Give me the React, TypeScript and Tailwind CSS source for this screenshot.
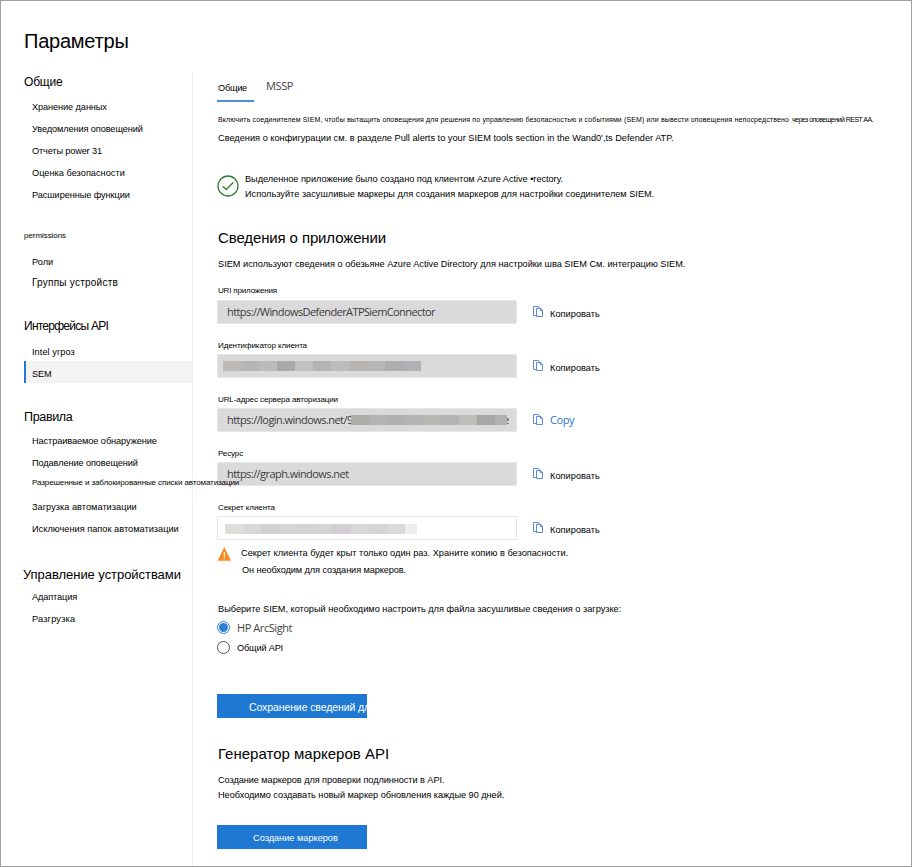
import type { ReactNode } from "react";

const CopyIcon = () => (
  <svg className="size-3 shrink-0" viewBox="0 0 12 12" fill="none" stroke="#5b8ad6" strokeWidth="1">
    <path d="M3 9.5H.5V.5H5.5L6.5 2" />
    <path d="M3.5 2.5H7.5L9.5 4.5V10.5H3.5Z" />
    <path d="M7.5 2.5V4.5H9.5" />
  </svg>
);

type Item = { text: string; cls: string };

const NavItem = ({ text, cls }: Item) => (
  <div className={`h-[22px] pl-2 leading-[22px] ${cls}`}>{text}</div>
);

const NavHeading = ({ text, cls }: Item) => (
  <div className={`h-[22px] leading-[22px] ${cls}`}>{text}</div>
);

const Blocks = ({ colors }: { colors: string[] }) => (
  <span className="flex h-[10px]">
    {colors.map((c, i) => (
      <span key={i} className={`h-[10px] ${c}`} />
    ))}
  </span>
);

type FieldProps = {
  label: string;
  labelCls: string;
  boxCls: string;
  action?: ReactNode;
  children: ReactNode;
};

const Field = ({ label, labelCls, boxCls, action, children }: FieldProps) => (
  <div className="h-[54px]">
    <div className={`h-5 pl-px text-[8px] leading-5 ${labelCls}`}>{label}</div>
    <div className="flex h-6">
      <div className={`flex h-6 w-[300px] items-center border border-[#e6e6e6] font-['Open_Sans'] text-[11px] leading-[22px] text-[#3c3c3c] ${boxCls}`}>
        {children}
      </div>
      <div className="ml-4 flex pt-1.5">
        <CopyIcon />
        {action ?? <span className="ml-[5px] h-4 text-[9.2px] leading-[16px] tracking-[0.04px]">Копировать</span>}
      </div>
    </div>
  </div>
);

const Sidebar = () => (
  <nav className="h-[795px] w-[169px] shrink-0 border-r border-[#f0f0f0] text-[9.2px]">
    <NavHeading text="Общие" cls="-mt-px text-[12px] tracking-[-0.2px]" />
    <NavItem text="Хранение данных" cls="mt-[3px] tracking-[-0.09px]" />
    <NavItem text="Уведомления оповещений" cls="tracking-[-0.1px]" />
    <NavItem text="Отчеты power 31" cls="tracking-[-0.15px]" />
    <NavItem text="Оценка безопасности" cls="tracking-[0.02px]" />
    <NavItem text="Расширенные функции" cls="tracking-[-0.08px]" />

    <NavHeading text="permissions" cls="mt-[19px] text-[8px] tracking-[-0.06px]" />
    <NavItem text="Роли" cls="mt-1" />
    <NavItem text="Группы устройств" cls="-mt-px text-[10px] tracking-[0.24px]" />

    <NavHeading text="Интерфейсы API" cls="mt-[21px] text-[12px] tracking-[-0.75px]" />
    <NavItem text="Intel угроз" cls="mt-1 tracking-[0.06px]" />
    <div className="-mt-0.5 h-[22px] border-l-2 border-[#1f78d1] bg-[#f3f3f3] pl-1.5 pt-0.5 leading-[22px] tracking-[-0.15px]">SEM</div>

    <NavHeading text="Правила" cls="mt-[23px] text-[12.5px] tracking-[-0.33px]" />
    <NavItem text="Настраиваемое обнаружение" cls="mt-0.5 tracking-[-0.08px]" />
    <NavItem text="Подавление оповещений" cls="tracking-[-0.1px]" />
    <NavItem text="Разрешенные и заблокированные списки автоматизации" cls="relative z-10 -mt-0.5 whitespace-nowrap text-[8px] tracking-[-0.1px]" />
    <NavItem text="Загрузка автоматизации" cls="mt-0.5 tracking-[0.03px]" />
    <NavItem text="Исключения папок автоматизации" cls="tracking-[0.02px]" />

    <NavHeading text="Управление устройствами" cls="-ml-px mt-6 whitespace-nowrap text-[13px] tracking-[-0.05px]" />
    <NavItem text="Адаптация" cls="tracking-[-0.13px]" />
    <NavItem text="Разгрузка" cls="tracking-[0.19px]" />
  </nav>
);

const Settings = () => (
  <main className="ml-6 w-[680px] whitespace-nowrap text-[9.2px]">
    <div className="flex h-[30px]">
      <div className="h-[30px] w-[37px] border-b-2 border-[#4a8fda] pl-px pt-[5px] leading-[22px] tracking-[-0.25px]">Общие</div>
      <div className="ml-3 pt-1 font-['Open_Sans'] text-[11px] leading-[20px] tracking-[-0.4px] text-[#444]">MSSP</div>
    </div>

    <div className="mt-[9px] flex h-[18px] pl-px text-[7px] leading-[18px]">
      <span className="tracking-[0.132px]">Включить соединителем SIEM, чтобы вытащить оповещения для решения по управлению безопасностью и событиями (SEM) или вывести оповещения непосредствено</span>
      <span className="ml-[3px] tracking-[-0.52px]">через оповещений REST AA.</span>
    </div>
    <div className="h-[18px] pl-px leading-[18px] tracking-[0.012px]">Сведения о конфигурации см. в разделе Pull alerts to your SIEM tools section in the Wand0',ts Defender ATP.</div>

    <div className="mt-[25px] flex h-[30px]">
      <svg className="mt-[3px] size-[22px]" viewBox="0 0 22 22" fill="none" stroke="#2f7d32">
        <circle cx="11" cy="11" r="10" strokeWidth="1.3" />
        <path d="M5.8 11.2L9.2 14.5L16.3 7.5" strokeWidth="1.3" />
      </svg>
      <div className="ml-1.5 leading-[15px]">
        <div className="tracking-[-0.035px]">Выделенное приложение было создано под клиентом Azure Active •rectory.</div>
        <div className="tracking-[0.004px]">Используйте засушливые маркеры для создания маркеров для настройки соединителем SIEM.</div>
      </div>
    </div>

    <h2 className="mt-6 h-6 pl-px text-[15px] leading-6 tracking-[-0.12px]">Сведения о приложении</h2>
    <div className="mt-1 h-5 pl-px leading-5 tracking-[0.005px]">SIEM используют сведения о обезьяне Azure Active Directory для настройки шва SIEM См. интеграцию SIEM.</div>

    <div className="mt-1.5 h-[270px]">
      <Field label="URI приложения" labelCls="pt-px tracking-[-0.17px]" boxCls="bg-[#dadada] pl-[9px] tracking-[-0.585px]">
        https://WindowsDefenderATPSiemConnector
      </Field>
      <Field label="Идентификатор клиента" labelCls="pt-0.5 tracking-[-0.083px]" boxCls="bg-[#dadada] pl-[5px]">
        <Blocks
          colors={["w-[18px] bg-[#bbbab9]", "w-[18px] bg-[#b5b5b5]", "w-[18px] bg-[#bababa]", "w-[18px] bg-[#a9aaac]", "w-[18px] bg-[#c0c0be]", "w-[18px] bg-[#b4b4b4]", "w-[18px] bg-[#babbbd]", "w-[18px] bg-[#b6b5b2]", "w-[18px] bg-[#b6b6b6]", "w-[18px] bg-[#adadad]", "w-[18px] bg-[#b0b1b4]"]}
        />
      </Field>
      <Field
        label="URL-адрес сервера авторизации"
        labelCls="pt-0.5 tracking-[-0.091px]"
        boxCls="bg-[#dadada] pl-[9px] tracking-[-0.55px]"
        action={<span className="ml-[5px] -mt-0.5 font-['Open_Sans'] text-[11px] leading-[16px] tracking-[-0.4px] text-[#2b73c7]">Copy</span>}
      >
        <span className="w-[124px] overflow-hidden">https://login.windows.net/9</span>
        <Blocks
          colors={["w-[18px] bg-[#adadac]", "w-[18px] bg-[#b3b3b3]", "w-[18px] bg-[#b0b0b0]", "w-[18px] bg-[#b3b3b3]", "w-[18px] bg-[#b7b7b2]", "w-[18px] bg-[#b4b4b4]", "w-[18px] bg-[#bdbdbc]", "w-[18px] bg-[#a8a8a8]", "w-[12px] bg-[#b1b1b2]"]}
        />
        <span className="flex w-[2px] justify-end overflow-hidden">e</span>
      </Field>
      <Field label="Ресурс" labelCls="pt-0.5 tracking-[-0.133px]" boxCls="bg-[#dadada] pl-[9px] tracking-[-0.554px]">
        https://graph.windows.net
      </Field>
      <Field label="Секрет клиента" labelCls="pt-0.5 tracking-[-0.063px]" boxCls="bg-white pl-[7px] pt-0.5">
        <Blocks
          colors={["w-[18px] bg-[#dfdedc]", "w-[18px] bg-[#d8d8d8]", "w-[18px] bg-[#d0d0d0]", "w-[18px] bg-[#d6d4d5]", "w-[18px] bg-[#d2d4d3]", "w-[18px] bg-[#d4d4d4]", "w-[18px] bg-[#d1cfd1]", "w-[18px] bg-[#d8d8d8]", "w-[18px] bg-[#d5d5d5]", "w-[18px] bg-[#dadad8]", "w-[12px] bg-[#ededf0]"]}
        />
      </Field>
    </div>

    <div className="flex h-[34px]">
      <svg className="mt-[-3px] h-[14px] w-[14px]" viewBox="0 0 14 14">
        <path d="M7.3 0L14 13.7H.6Z" fill="#f98b25" />
        <path d="M7.3 5V9.7M7.3 10.7V12" stroke="#fff" strokeWidth="1.2" />
      </svg>
      <div className="-mt-[5px] ml-[10px] leading-[17px]">
        <div className="tracking-[0.012px]">Секрет клиента будет крыт только один раз. Храните копию в безопасности.</div>
        <div className="pl-px tracking-[-0.095px]">Он необходим для создания маркеров.</div>
      </div>
    </div>

    <div className="mt-[15px] h-5 pl-px leading-5">Выберите SIEM, который необходимо настроить для файла засушливые сведения о загрузке:</div>
    <div className="-mt-px flex h-5">
      <span className="mt-[3px] flex size-[13px] items-center justify-center rounded-full border border-[#3c7fd0]">
        <span className="size-[9px] rounded-full bg-[#2f80d4]" />
      </span>
      <span className="ml-[7px] font-['Open_Sans'] text-[11px] leading-5 tracking-[-0.43px] text-[#444]">HP ArcSight</span>
    </div>
    <div className="flex h-5">
      <span className="mt-[3px] size-[13px] rounded-full border border-[#555]" />
      <span className="ml-[7px] leading-5 tracking-[-0.18px]">Общий API</span>
    </div>

    <button className="mt-9 block h-6 w-[150px] overflow-hidden bg-[#1f78d1] pl-8 pt-px text-left text-[10.5px] leading-6 tracking-[-0.1px] text-white">Сохранение сведений для</button>

    <h2 className="mt-6 h-6 pl-px text-[15px] leading-6">Генератор маркеров API</h2>
    <div className="mt-[7px] h-[30px] pl-px leading-[15px]">
      <div className="tracking-[-0.07px]">Создание маркеров для проверки подлинности в API.</div>
      <div className="tracking-[-0.035px]">Необходимо создавать новый маркер обновления каждые 90 дней.</div>
    </div>
    <button className="mt-[22px] block h-6 w-[150px] bg-[#1f78d1] pl-9 pt-px text-left leading-6 text-white">Создание маркеров</button>
  </main>
);

export default function App() {
  return (
    <div className="h-[867px] w-[912px] overflow-hidden border border-[#a0a0a0] bg-white pl-[23px] font-['Liberation_Sans',sans-serif] text-black">
      <h1 className="h-[71px] pt-[28px] text-[20px] leading-6 tracking-[-0.23px]">Параметры</h1>
      <div className="flex">
        <Sidebar />
        <Settings />
      </div>
    </div>
  );
}
